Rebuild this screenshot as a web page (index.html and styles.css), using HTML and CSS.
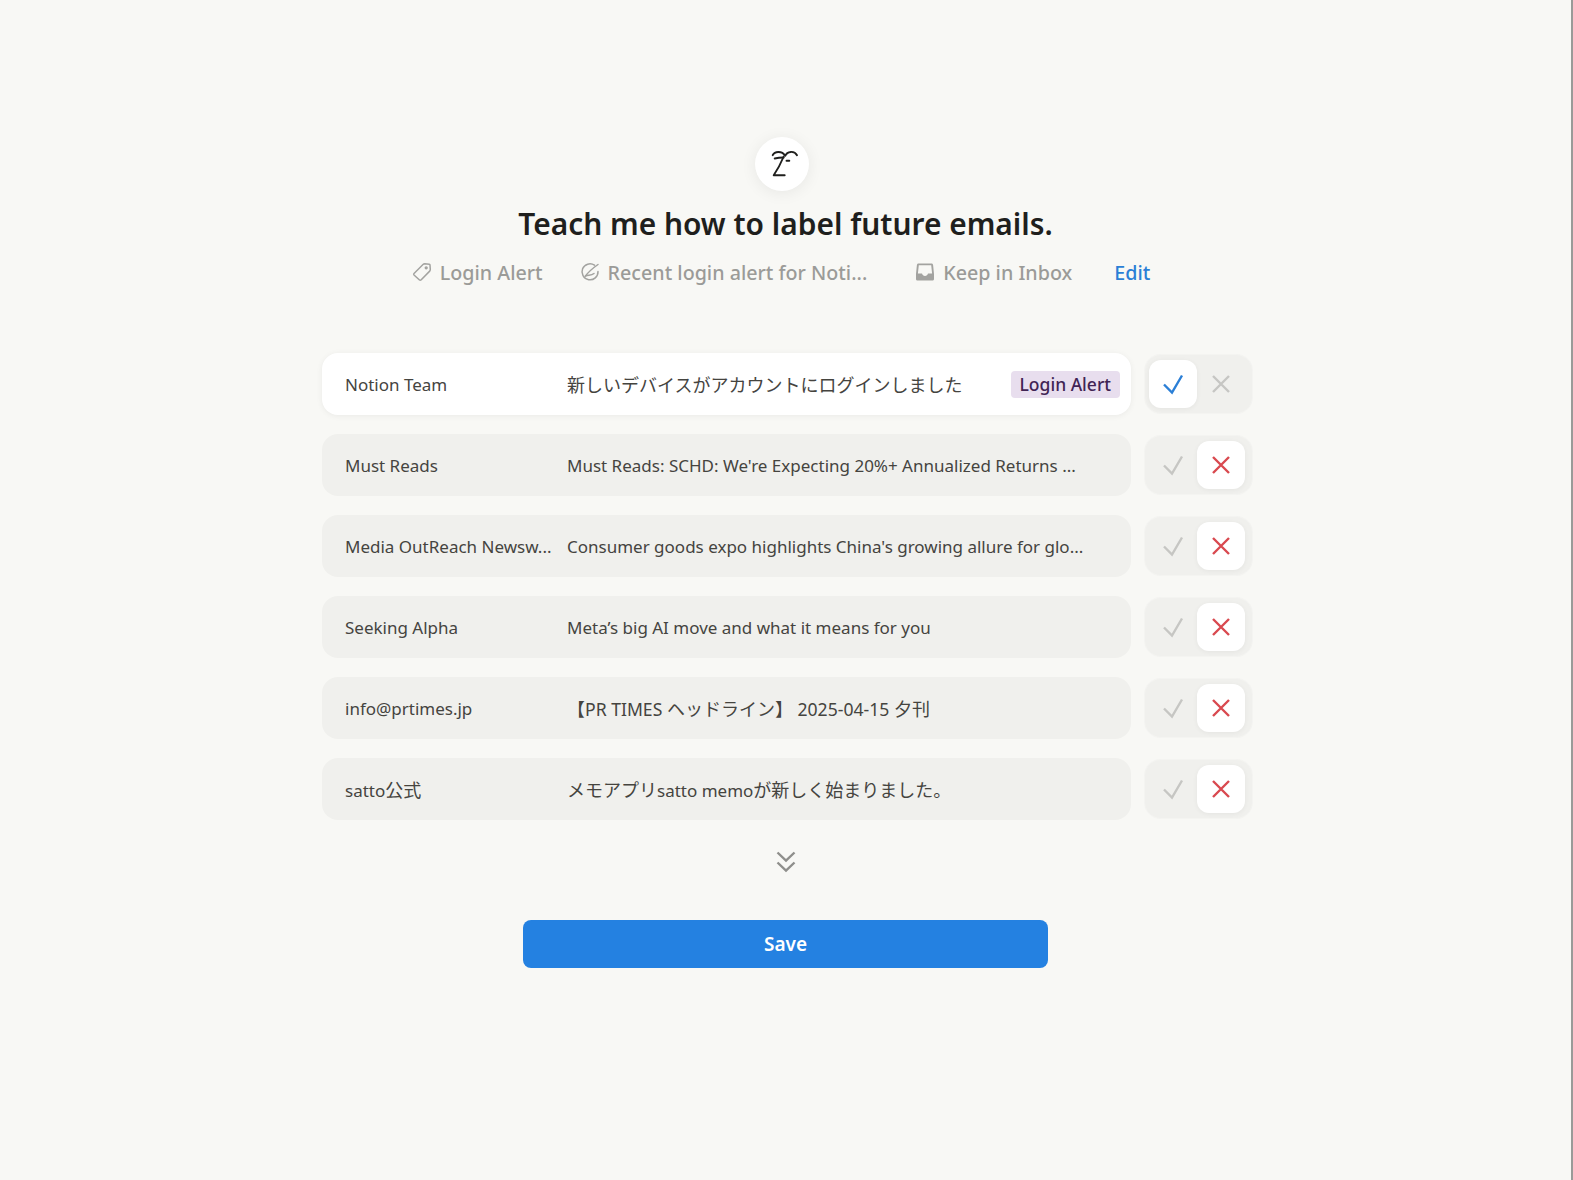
FILE: index.html
```html
<!DOCTYPE html>
<html lang="en">
<head>
    <meta charset="UTF-8">
    <meta name="viewport" content="width=device-width, initial-scale=1.0">
    <title>Teach me how to label future emails</title>
    <link rel="stylesheet" href="styles.css">
</head>
<body>
    <main class="page">
        <div class="logo">
            <svg width="34" height="34" viewBox="0 0 34 34" fill="none" stroke="#1f1f1d" stroke-width="1.9" stroke-linecap="round" stroke-linejoin="round">
                <path d="M7.7 8.2C9.5 4 17 3.5 20.3 8.8C22 4 29.5 3.5 32 8.2"/>
                <path d="M9.7 11.5C12.5 10.8 15.5 10.5 18.7 10.5"/>
                <path d="M21.5 13.8L24.3 13.8"/>
                <path d="M18.7 9.5C16 16 13 22 8.7 28.2L19.7 28.2"/>
            </svg>
        </div>
        <h1 class="title">Teach me how to label future emails.</h1>

        <div class="rule-bar">
            <span class="rule">
                <svg class="rule-icon" width="22" height="22" viewBox="0 0 22 22" fill="none" stroke="#a3a3a0" stroke-width="1.5" stroke-linejoin="round">
                    <path d="M3 12.5L12 3.5C12.5 3 13 2.8 13.8 2.8L18.3 3.2C18.8 3.3 19 3.6 19 4L19.3 8.6C19.3 9.2 19.1 9.7 18.7 10.1L10 19C9.5 19.4 9 19.4 8.5 19L3 14C2.6 13.6 2.6 13 3 12.5Z"/>
                    <circle cx="15.2" cy="6.8" r="0.9"/>
                </svg>
                Login Alert
            </span>
            <span class="rule rule-filter">
                <svg class="rule-icon" width="22" height="22" viewBox="0 0 22 22" fill="none" stroke="#a3a3a0" stroke-width="1.5" stroke-linecap="round">
                    <path d="M15.5 4.2A8 8 0 1 0 19 10.5"/>
                    <path d="M6.5 15C9 11.5 14 7 19 3.5"/>
                    <path d="M6.5 15C9 13.5 12 15 15 12.5"/>
                </svg>
                Recent login alert for Noti...
            </span>
            <span class="rule rule-inbox">
                <svg class="rule-icon" width="22" height="22" viewBox="0 0 22 22" fill="#a3a3a0">
                    <path d="M4.5 2.5H17.5C18.4 2.5 19 3.1 19.1 4L20 13V18C20 19 19.2 19.6 18.2 19.6H3.8C2.8 19.6 2 19 2 18V13L2.9 4C3 3.1 3.6 2.5 4.5 2.5ZM4.8 4.2L3.9 12.6H8C8.4 14.2 9.5 15 11 15C12.5 15 13.6 14.2 14 12.6H18.1L17.2 4.2Z" fill-rule="evenodd"/>
                </svg>
                Keep in Inbox
            </span>
            <a class="edit" href="#">Edit</a>
        </div>

        <div class="list">
            <div class="row">
                <div class="email email-on">
                    <span class="sender">Notion Team</span>
                    <span class="subject jp">新しいデバイスがアカウントにログインしました</span>
                    <span class="tag">Login Alert</span>
                </div>
                <div class="choice">
                    <span class="btn btn-on"><svg width="24" height="24" viewBox="0 0 24 24" class="ic ic-yes"><path d="M3 12.5L11 20.5L21 3.5"/></svg></span>
                    <span class="btn"><svg width="24" height="24" viewBox="0 0 24 24" class="ic ic-off"><path d="M4 4L20 20M20 4L4 20"/></svg></span>
                </div>
            </div>
            <div class="row">
                <div class="email">
                    <span class="sender">Must Reads</span>
                    <span class="subject">Must Reads: SCHD: We're Expecting 20%+ Annualized Returns ...</span>
                </div>
                <div class="choice">
                    <span class="btn"><svg width="24" height="24" viewBox="0 0 24 24" class="ic ic-off"><path d="M3 12.5L11 20.5L21 3.5"/></svg></span>
                    <span class="btn btn-on"><svg width="24" height="24" viewBox="0 0 24 24" class="ic ic-no"><path d="M4 4L20 20M20 4L4 20"/></svg></span>
                </div>
            </div>
            <div class="row">
                <div class="email">
                    <span class="sender">Media OutReach Newsw...</span>
                    <span class="subject">Consumer goods expo highlights China's growing allure for glo...</span>
                </div>
                <div class="choice">
                    <span class="btn"><svg width="24" height="24" viewBox="0 0 24 24" class="ic ic-off"><path d="M3 12.5L11 20.5L21 3.5"/></svg></span>
                    <span class="btn btn-on"><svg width="24" height="24" viewBox="0 0 24 24" class="ic ic-no"><path d="M4 4L20 20M20 4L4 20"/></svg></span>
                </div>
            </div>
            <div class="row">
                <div class="email">
                    <span class="sender">Seeking Alpha</span>
                    <span class="subject">Meta’s big AI move and what it means for you</span>
                </div>
                <div class="choice">
                    <span class="btn"><svg width="24" height="24" viewBox="0 0 24 24" class="ic ic-off"><path d="M3 12.5L11 20.5L21 3.5"/></svg></span>
                    <span class="btn btn-on"><svg width="24" height="24" viewBox="0 0 24 24" class="ic ic-no"><path d="M4 4L20 20M20 4L4 20"/></svg></span>
                </div>
            </div>
            <div class="row">
                <div class="email">
                    <span class="sender">info@prtimes.jp</span>
                    <span class="subject"><span class="jp">【</span><span class="mixed">PR TIMES </span><span class="jp">ヘッドライン】</span><span class="mixed"> 2025-04-15 </span><span class="jp">夕刊</span></span>
                </div>
                <div class="choice">
                    <span class="btn"><svg width="24" height="24" viewBox="0 0 24 24" class="ic ic-off"><path d="M3 12.5L11 20.5L21 3.5"/></svg></span>
                    <span class="btn btn-on"><svg width="24" height="24" viewBox="0 0 24 24" class="ic ic-no"><path d="M4 4L20 20M20 4L4 20"/></svg></span>
                </div>
            </div>
            <div class="row">
                <div class="email">
                    <span class="sender">satto<span class="jp">公式</span></span>
                    <span class="subject"><span class="jp">メモアプリ</span>satto memo<span class="jp">が新しく始まりました。</span></span>
                </div>
                <div class="choice">
                    <span class="btn"><svg width="24" height="24" viewBox="0 0 24 24" class="ic ic-off"><path d="M3 12.5L11 20.5L21 3.5"/></svg></span>
                    <span class="btn btn-on"><svg width="24" height="24" viewBox="0 0 24 24" class="ic ic-no"><path d="M4 4L20 20M20 4L4 20"/></svg></span>
                </div>
            </div>
        </div>

        <svg class="more" width="20" height="22" viewBox="0 0 20 22" fill="none" stroke="#8f8f8c" stroke-width="2.4">
            <path d="M1.5 1.5L10 9.5L18.5 1.5"/>
            <path d="M1.5 11.5L10 19.5L18.5 11.5"/>
        </svg>

        <button class="save" type="button">Save</button>
    </main>
</body>
</html>
```

FILE: styles.css
```css
html, body {
    margin: 0;
    height: 100%;
}

body {
    background-color: #f8f8f5;
    border-right: 2px solid #9a9a98;
    font-family: "Noto Sans", "Noto Sans CJK JP", sans-serif;
    color: #37352f;
    overflow: hidden;
}

.page {
    display: flex;
    flex-direction: column;
    align-items: center;
    padding-top: 137px;
}

.logo {
    width: 54px;
    height: 54px;
    margin-right: 8px;
    border-radius: 50%;
    background-color: #fff;
    box-shadow: 0 2px 16px rgba(0, 0, 0, 0.07);
    display: flex;
    align-items: center;
    justify-content: center;
}

.title {
    margin: 11px 0 0;
    font-size: 29.9px;
    line-height: 44px;
    font-weight: 600;
    color: #1f1f1d;
}

.rule-bar {
    display: flex;
    align-items: center;
    margin: 6px 10px 0 0;
    height: 40px;
    font-size: 19.7px;
    font-weight: 500;
    color: #9b9b98;
}

.rule {
    display: flex;
    align-items: center;
    gap: 7px;
    white-space: nowrap;
}

.rule-filter {
    margin-left: 36px;
}

.rule-inbox {
    margin-left: 47px;
}

.edit {
    margin-left: 42px;
    color: #2b7fd6;
    text-decoration: none;
}

.list {
    display: flex;
    flex-direction: column;
    gap: 19px;
    margin: 61px 0 0 3px;
}

.row {
    display: flex;
    align-items: center;
    gap: 14px;
}

.email {
    width: 809px;
    height: 62px;
    padding-left: 23px;
    box-sizing: border-box;
    border-radius: 16px;
    background-color: #f0f0ed;
    display: flex;
    align-items: center;
    font-size: 17px;
    color: #45443f;
}

.email-on {
    background-color: #fff;
    box-shadow: 0 1px 6px rgba(0, 0, 0, 0.06);
}

.sender {
    width: 222px;
    white-space: nowrap;
}

.subject {
    flex: 1;
    white-space: pre;
}

.jp {
    font-size: 18px;
}

.mixed {
    font-size: 17.6px;
}

.tag {
    margin-right: 11px;
    padding: 0 9px;
    height: 27px;
    line-height: 27px;
    border-radius: 4px;
    background-color: #e8deee;
    color: #412454;
    font-size: 17.5px;
    font-weight: 500;
}

.choice {
    width: 107px;
    height: 58px;
    padding-left: 4px;
    box-sizing: border-box;
    border-radius: 16px;
    background-color: #f0f0ed;
    box-shadow: 0 0 0 1px rgba(240, 240, 237, 0.5);
    display: flex;
    align-items: center;
}

.btn {
    width: 48px;
    height: 48px;
    border-radius: 12px;
    display: flex;
    align-items: center;
    justify-content: center;
}

.btn-on {
    background-color: #fff;
    box-shadow: 0 1px 5px rgba(0, 0, 0, 0.05);
}

.ic {
    fill: none;
    stroke-width: 2.4;
}

.ic-yes {
    stroke: #2b7fd6;
}

.ic-no {
    stroke: #d9494f;
}

.ic-off {
    stroke: #c6c6c3;
}

.more {
    margin-top: 31px;
}

.save {
    margin-top: 47px;
    width: 525px;
    height: 48px;
    border: none;
    border-radius: 8px;
    background-color: #2481e1;
    color: #fff;
    font-family: inherit;
    font-size: 19px;
    font-weight: 600;
}
```
